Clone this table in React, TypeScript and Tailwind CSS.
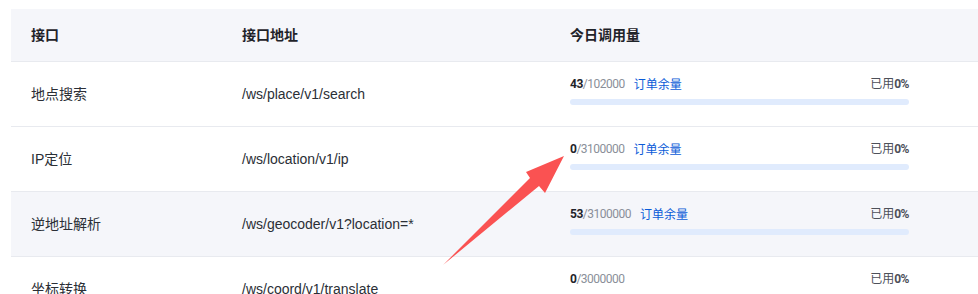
const rows = [
  { name: "地点搜索", path: "/ws/place/v1/search", used: "43", total: "102000", order: true, bg: "bg-white" },
  { name: "IP定位", path: "/ws/location/v1/ip", used: "0", total: "3100000", order: true, bg: "bg-white" },
  { name: "逆地址解析", path: "/ws/geocoder/v1?location=*", used: "53", total: "3100000", order: true, bg: "bg-[#f5f6fa]" },
  { name: "坐标转换", path: "/ws/coord/v1/translate", used: "0", total: "3000000", order: false, bg: "bg-white" },
];

function Usage({ used, total, order }: { used: string; total: string; order: boolean }) {
  return (
    <div className="w-[339px] flex flex-col gap-[7px] pb-[7px]">
      <div className="flex items-center justify-between text-[12px] leading-[16px]">
        <div className="flex items-center">
          <span className="font-['Roboto'] tracking-[-0.5px]">
            <span className="font-bold text-[#1f2329]">{used}</span>
            <span className="text-[#8a8f99]">/{total}</span>
          </span>
          {order && <span className="ml-[9px] text-[#0a5bd8] font-['Noto_Sans_CJK_SC',sans-serif]">订单余量</span>}
        </div>
        <span className="text-[#4d5059]">
          已用<span className="font-['Roboto'] font-bold tracking-[-0.5px] text-[#4d5059]">0%</span>
        </span>
      </div>
      {order && <div className="h-[6px] rounded-full bg-[#e0ebfd]" />}
      {!order && <div className="h-[6px]" />}
    </div>
  );
}

export default function App() {
  return (
    <div className="relative w-[978px] h-[294px] overflow-hidden bg-white pt-[9px] pl-[11px] font-['Liberation_Sans','Noto_Sans_CJK_SC',sans-serif]">
      <div className="w-full">
        {/* header */}
        <div className="flex h-[53px] items-center bg-[#f5f6fa] border-b border-[#e8eaef] text-[14px] font-bold text-[#1f2329]">
          <div className="w-[211px] pl-[20px]">接口</div>
          <div className="w-[328px] pl-[20px]">接口地址</div>
          <div className="flex-1 pl-[20px]">今日调用量</div>
        </div>
        {rows.map((r) => (
          <div key={r.name} className={`flex h-[65px] items-center border-b border-[#e8eaef] text-[14px] text-[#2b2f36] ${r.bg}`}>
            <div className="w-[211px] pl-[20px]">{r.name}</div>
            <div className="w-[328px] pl-[20px]">{r.path}</div>
            <div className="flex-1 pl-[20px]">
              <Usage used={r.used} total={r.total} order={r.order} />
            </div>
          </div>
        ))}
      </div>

      {/* annotation arrow */}
      <svg className="absolute left-0 top-0 pointer-events-none" width="978" height="294">
        <polygon
          points="443,265 530,178 526,172 564,156 545,193 539,186"
          fill="#fa5252"
        />
      </svg>
    </div>
  );
}
